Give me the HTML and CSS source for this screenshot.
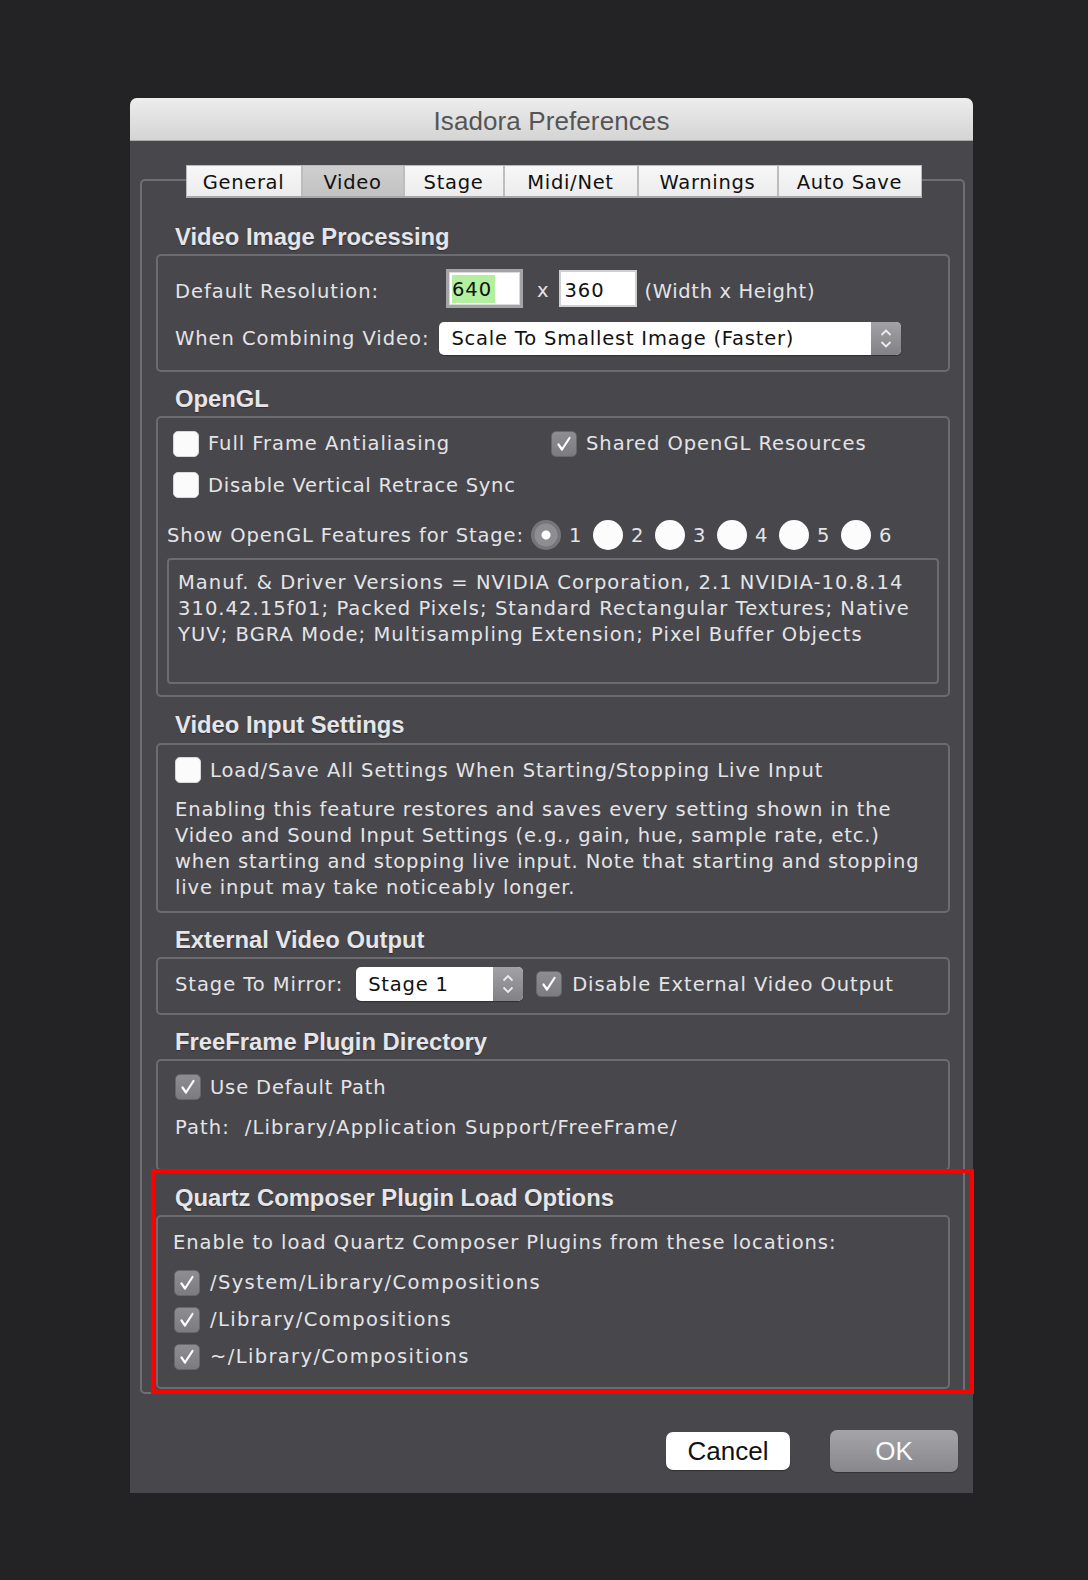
FILE: index.html
```html
<!DOCTYPE html>
<html>
<head>
<meta charset="utf-8">
<title>Isadora Preferences</title>
<link rel="stylesheet" href="styles.css">
</head>
<body>
<div class="window">
  <div class="titlebar">Isadora Preferences</div>
  <div class="wbody">
    <div class="tabbox">
      <div class="tabs">
        <div class="tab t1">General</div>
        <div class="tab t2 sel">Video</div>
        <div class="tab t3">Stage</div>
        <div class="tab t4">Midi/Net</div>
        <div class="tab t5">Warnings</div>
        <div class="tab t6">Auto Save</div>
      </div>

      <div class="hdr first">Video Image Processing</div>
      <div class="group g-vip">
        <div class="row r-res">
          <span class="lbl lbl-res">Default Resolution:</span>
          <span class="field focus"><span class="hl">640</span></span>
          <span class="times">x</span>
          <span class="field">360</span>
          <span class="hint">(Width x Height)</span>
        </div>
        <div class="row r-comb">
          <span class="lbl">When Combining Video:</span>
          <div class="popup p-wide">
            <span class="ptext">Scale To Smallest Image (Faster)</span>
            <span class="stepper"><svg width="30" height="33" viewBox="0 0 30 33"><polyline points="10.5,13 15,8.5 19.5,13" fill="none" stroke="#ececec" stroke-width="1.8"/><polyline points="10.5,20 15,24.5 19.5,20" fill="none" stroke="#ececec" stroke-width="1.8"/></svg></span>
          </div>
        </div>
      </div>

      <div class="hdr">OpenGL</div>
      <div class="group g-gl">
        <div class="grid2">
          <label class="chk"><span class="cb"></span><span>Full Frame Antialiasing</span></label>
          <label class="chk"><span class="cb on"><svg width="24" height="24" viewBox="0 0 24 24"><polyline points="6.5,12.5 10,17.5 17.5,6" fill="none" stroke="#fff" stroke-width="2.2" stroke-linecap="round" stroke-linejoin="round"/></svg></span><span>Shared OpenGL Resources</span></label>
        </div>
        <label class="chk r-vsync"><span class="cb"></span><span>Disable Vertical Retrace Sync</span></label>
        <div class="radios">
          <span class="rlbl">Show OpenGL Features for Stage:</span>
          <span class="ropt"><span class="radio on"></span>1</span>
          <span class="ropt"><span class="radio"></span>2</span>
          <span class="ropt"><span class="radio"></span>3</span>
          <span class="ropt"><span class="radio"></span>4</span>
          <span class="ropt"><span class="radio"></span>5</span>
          <span class="ropt"><span class="radio"></span>6</span>
        </div>
        <div class="textbox">Manuf. &amp; Driver Versions = NVIDIA Corporation, 2.1 NVIDIA-10.8.14<br>310.42.15f01; Packed Pixels; Standard Rectangular Textures; Native<br>YUV; BGRA Mode; Multisampling Extension; Pixel Buffer Objects</div>
      </div>

      <div class="hdr h-vin">Video Input Settings</div>
      <div class="group g-vin">
        <label class="chk"><span class="cb"></span><span>Load/Save All Settings When Starting/Stopping Live Input</span></label>
        <p class="para">Enabling this feature restores and saves every setting shown in the<br>Video and Sound Input Settings (e.g., gain, hue, sample rate, etc.)<br>when starting and stopping live input. Note that starting and stopping<br>live input may take noticeably longer.</p>
      </div>

      <div class="hdr">External Video Output</div>
      <div class="group g-ext">
        <span class="lbl">Stage To Mirror:</span>
        <div class="popup p-stage">
          <span class="ptext">Stage 1</span>
          <span class="stepper"><svg width="30" height="34" viewBox="0 0 30 34"><polyline points="10.5,13.5 15,9 19.5,13.5" fill="none" stroke="#ececec" stroke-width="1.8"/><polyline points="10.5,20.5 15,25 19.5,20.5" fill="none" stroke="#ececec" stroke-width="1.8"/></svg></span>
        </div>
        <label class="chk c-ext"><span class="cb on"><svg width="24" height="24" viewBox="0 0 24 24"><polyline points="6.5,12.5 10,17.5 17.5,6" fill="none" stroke="#fff" stroke-width="2.2" stroke-linecap="round" stroke-linejoin="round"/></svg></span><span>Disable External Video Output</span></label>
      </div>

      <div class="hdr">FreeFrame Plugin Directory</div>
      <div class="group g-ff">
        <label class="chk"><span class="cb on"><svg width="24" height="24" viewBox="0 0 24 24"><polyline points="6.5,12.5 10,17.5 17.5,6" fill="none" stroke="#fff" stroke-width="2.2" stroke-linecap="round" stroke-linejoin="round"/></svg></span><span>Use Default Path</span></label>
        <div class="pathline">Path:&nbsp; /Library/Application Support/FreeFrame/</div>
      </div>

      <div class="hdr">Quartz Composer Plugin Load Options</div>
      <div class="group g-qc">
        <div class="qline">Enable to load Quartz Composer Plugins from these locations:</div>
        <label class="chk qchk"><span class="cb on"><svg width="24" height="24" viewBox="0 0 24 24"><polyline points="6.5,12.5 10,17.5 17.5,6" fill="none" stroke="#fff" stroke-width="2.2" stroke-linecap="round" stroke-linejoin="round"/></svg></span><span>/System/Library/Compositions</span></label>
        <label class="chk qchk"><span class="cb on"><svg width="24" height="24" viewBox="0 0 24 24"><polyline points="6.5,12.5 10,17.5 17.5,6" fill="none" stroke="#fff" stroke-width="2.2" stroke-linecap="round" stroke-linejoin="round"/></svg></span><span>/Library/Compositions</span></label>
        <label class="chk qchk"><span class="cb on"><svg width="24" height="24" viewBox="0 0 24 24"><polyline points="6.5,12.5 10,17.5 17.5,6" fill="none" stroke="#fff" stroke-width="2.2" stroke-linecap="round" stroke-linejoin="round"/></svg></span><span>~/Library/Compositions</span></label>
      </div>
    </div>

    <div class="buttons">
      <button class="btn cancel">Cancel</button>
      <button class="btn ok">OK</button>
    </div>
  </div>
  <div class="highlight"></div>
</div>
</body>
</html>
```

FILE: styles.css
```css
html, body {
  margin: 0;
  padding: 0;
  background: #232325;
}
body {
  font-family: "DejaVu Sans", "Noto Sans", sans-serif;
  font-size: 19.5px;
  letter-spacing: 0.95px;
  color: #e4e4e6;
  padding-top: 98px;
  height: 1482px;
}
.window {
  position: relative;
  width: 843px;
  height: 1395px;
  margin-left: 130px;
  background: #48474c;
  border-radius: 7px 7px 0 0;
  display: flex;
  flex-direction: column;
}
.titlebar {
  height: 43px;
  box-sizing: border-box;
  background: linear-gradient(#ededed, #d4d4d4);
  border-bottom: 1px solid #a9a9a9;
  border-radius: 7px 7px 0 0;
  font-family: "Liberation Sans", Arial, sans-serif;
  font-size: 26px;
  letter-spacing: 0.1px;
  color: #555555;
  display: flex;
  align-items: center;
  justify-content: center;
  padding-top: 4px;
}
.wbody {
  flex: 1;
  display: flex;
  flex-direction: column;
  padding: 38px 8px 0 10px;
}
.tabbox {
  border: 2px solid #6f6e73;
  border-radius: 5px;
  padding: 0 13px 3px 14px;
  display: flex;
  flex-direction: column;
}
.tabs {
  align-self: center;
  margin-top: -16px;
  margin-left: 1px;
  display: flex;
  height: 33px;
  box-sizing: border-box;
  border: 1px solid #b9b9bb;
  border-bottom: 2px solid #a7a7a9;
  background: #f2f2f2;
  letter-spacing: 0.7px;
}
.tab {
  display: flex;
  align-items: center;
  justify-content: center;
  color: #111;
  background: linear-gradient(#f7f7f7, #ececec);
  border-left: 2px solid #bdbdbf;
  box-sizing: border-box;
  height: 100%;
  padding-top: 2px;
}
.tab.t1 { border-left: none; width: 114px; }
.tab.t2 { width: 102px; }
.tab.t3 { width: 100px; }
.tab.t4 { width: 134px; }
.tab.t5 { width: 140px; }
.tab.t6 { width: 144px; }
.tab.sel {
  background: linear-gradient(#cfcfcf, #c2c2c2);
}

.hdr {
  font-family: "Liberation Sans", Arial, sans-serif;
  font-weight: bold;
  font-size: 23.8px;
  letter-spacing: 0;
  color: #e6e6e8;
  text-shadow: 0 1px 1px rgba(0, 0, 0, 0.35);
  height: 28px;
  line-height: 28px;
  margin: 13px 0 3px 19px;
}
.hdr.first { margin-top: 25px; }
.hdr.h-vin { margin-top: 14px; margin-bottom: 4px; }

.group {
  border: 2px solid #6c6b70;
  border-radius: 5px;
  box-sizing: border-box;
}
.row {
  display: flex;
  align-items: center;
}
.lbl { white-space: nowrap; }

/* Video image processing */
.g-vip { padding: 13px 17px 15px 17px; }
.r-res { height: 39px; }
.r-comb { height: 33px; margin-top: 14px; }
.lbl-res { width: 271px; padding-top: 5px; }
.field {
  display: inline-block;
  box-sizing: border-box;
  background: #fff;
  color: #111;
  width: 78px;
  height: 37px;
  border: 2px solid #cfcfcf;
  padding-left: 4px;
  padding-top: 2px;
  line-height: 33px;
}
.field.focus {
  width: 77px;
  height: 39px;
  border: 3px solid #a4a4a7;
  box-shadow: inset 0 0 0 1px #dadada;
  padding-left: 3px;
  padding-top: 0;
  display: flex;
  align-items: center;
}
.hl {
  background: #b2ef9e;
  padding-right: 3px;
  padding-top: 2px;
  display: inline-block;
  height: 28px;
  box-sizing: border-box;
  line-height: 26px;
}
.times { margin: 0 9px 0 14px; padding-top: 4px; }
.hint { margin-left: 8px; padding-top: 5px; letter-spacing: 0.65px; }
.r-comb .lbl { margin-right: 10px; }

.popup {
  display: flex;
  background: #fff;
  border-radius: 5px;
  overflow: hidden;
  box-shadow: 0 1px 1px rgba(0, 0, 0, 0.35);
}
.p-wide { width: 462px; height: 33px; }
.p-stage { width: 167px; height: 34px; margin-left: 13px; }
.ptext {
  flex: 1;
  color: #111;
  padding-left: 12px;
  display: flex;
  align-items: center;
  white-space: nowrap;
  letter-spacing: 0.8px;
}
.stepper {
  width: 30px;
  background: linear-gradient(#a2a1a6, #828187);
  display: flex;
  align-items: center;
  justify-content: center;
}
.stepper svg { display: block; }

/* checkboxes */
.chk {
  display: flex;
  align-items: center;
  white-space: nowrap;
}
.cb {
  width: 26px;
  height: 26px;
  box-sizing: border-box;
  border-radius: 5px;
  background: #fbfbfb;
  border: 1px solid #d8d8d8;
  margin-right: 9px;
  display: flex;
  align-items: center;
  justify-content: center;
  flex: none;
}
.cb.on {
  background: linear-gradient(#8e8d92, #7c7b80);
  border: 1px solid #68676c;
}
.cb svg { display: block; }

/* OpenGL */
.g-gl { padding: 12px 9px 11px 9px; }
.grid2 {
  display: grid;
  grid-template-columns: 378px auto;
  height: 27px;
  padding-left: 6px;
}
.r-vsync { height: 26px; margin-top: 15px; padding-left: 6px; letter-spacing: 0.75px; }
.radios {
  display: flex;
  align-items: center;
  height: 30px;
  margin-top: 22px;
}
.rlbl { margin-right: 7px; white-space: nowrap; letter-spacing: 0.9px; }
.ropt {
  display: flex;
  align-items: center;
  width: 62px;
  flex: none;
}
.radio {
  width: 30px;
  height: 30px;
  border-radius: 50%;
  background: #fcfcfc;
  margin-right: 8px;
  flex: none;
}
.radio.on {
  background: radial-gradient(circle, #ffffff 0 4px, #8e8d92 5px 11px, #76757a 12px);
}
.textbox {
  margin-top: 8px;
  height: 126px;
  box-sizing: border-box;
  border: 2px solid #6c6b70;
  border-radius: 4px;
  padding: 10px 9px 9px 9px;
  line-height: 26px;
  white-space: nowrap;
  letter-spacing: 1.05px;
}

/* Video input */
.g-vin { padding: 12px 17px 10px 17px; }
.g-vin .chk { height: 26px; }
.para {
  margin: 14px 0 0 0;
  line-height: 26px;
  white-space: nowrap;
  letter-spacing: 0.85px;
}

/* External */
.g-ext {
  display: flex;
  align-items: center;
  padding: 8px 17px 12px 17px;
}
.c-ext { margin-left: 13px; }
.c-ext .cb { margin-right: 10px; }

/* FreeFrame */
.g-ff { padding: 13px 17px 28px 17px; }
.g-ff .chk { height: 26px; letter-spacing: 0.85px; }
.pathline { margin-top: 15px; line-height: 26px; white-space: nowrap; letter-spacing: 1.13px; }

/* Quartz */
.g-qc { padding: 13px 15px 17px 15px; }
.qline { line-height: 26px; white-space: nowrap; letter-spacing: 0.97px; }
.qchk { height: 27px; margin-top: 10px; padding-left: 1px; letter-spacing: 1.37px; }
.qchk:first-of-type { margin-top: 13px; }
.qchk .cb { margin-right: 10px; }

/* Buttons */
.buttons {
  display: flex;
  justify-content: flex-end;
  align-items: center;
  margin: 36px 7px 0 0;
  height: 42px;
}
.btn {
  font-family: "Liberation Sans", Arial, sans-serif;
  font-size: 26px;
  letter-spacing: 0;
  border: none;
  border-radius: 7px;
  padding: 0;
  display: flex;
  align-items: center;
  justify-content: center;
}
.btn.cancel {
  width: 124px;
  height: 38px;
  background: #ffffff;
  color: #111;
  box-shadow: 0 1px 1px rgba(0, 0, 0, 0.35);
  margin-right: 40px;
}
.btn.ok {
  width: 128px;
  height: 42px;
  background: linear-gradient(#a5a4a9, #88878c);
  color: #fbfbfb;
  box-shadow: 0 1px 1px rgba(0, 0, 0, 0.3);
}

/* annotation overlay */
.highlight {
  position: absolute;
  left: 21px;
  top: 1071px;
  width: 823px;
  height: 225px;
  box-sizing: border-box;
  border: 4px solid #ff0000;
  pointer-events: none;
}
```
